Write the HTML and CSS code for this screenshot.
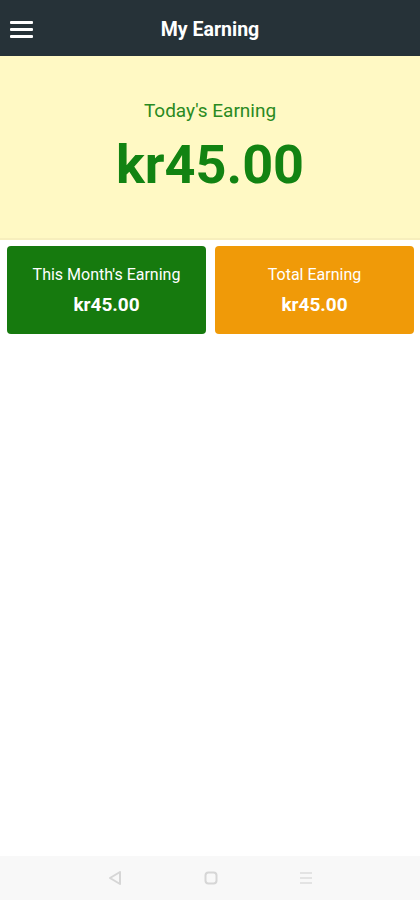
FILE: index.html
```html
<!DOCTYPE html>
<html lang="en">

<head>
    <meta charset="UTF-8">
    <meta name="viewport" content="width=device-width, initial-scale=1.0">
    <title>My Earning</title>
    <link rel="stylesheet" href="styles.css">
</head>

<body>
    <div class="app">
        <div class="topbar">
            <div class="menu-btn">
                <span></span>
                <span></span>
                <span></span>
            </div>
            <h1 class="title">My Earning</h1>
        </div>

        <div class="today">
            <p class="today-label">Today's Earning</p>
            <p class="today-amount">kr45.00</p>
        </div>

        <div class="cards">
            <div class="card card-month">
                <p class="card-label">This Month's Earning</p>
                <p class="card-amount">kr45.00</p>
            </div>
            <div class="card card-total">
                <p class="card-label">Total Earning</p>
                <p class="card-amount">kr45.00</p>
            </div>
        </div>

        <div class="spacer"></div>

        <div class="navbar">
            <svg width="14" height="16" viewBox="0 0 14 16">
                <path d="M12 2 L2 8 L12 14 Z" fill="none" stroke="#d6d6d6" stroke-width="2" stroke-linejoin="round"/>
            </svg>
            <svg width="14" height="14" viewBox="0 0 14 14">
                <rect x="1.5" y="1.5" width="11" height="11" rx="3" fill="none" stroke="#d6d6d6" stroke-width="2"/>
            </svg>
            <svg width="12" height="14" viewBox="0 0 12 14">
                <path d="M0 2 H12 M0 7 H12 M0 12 H12" stroke="#dcdcdc" stroke-width="1.6"/>
            </svg>
        </div>
    </div>
</body>

</html>
```

FILE: styles.css
```css
body {
    font-family: Roboto, "Liberation Sans", Arial, sans-serif;
    margin: 0;
    padding: 0;
    background-color: #ffffff;
}

p {
    margin: 0;
}

.app {
    display: flex;
    flex-direction: column;
    height: 900px;
}

.topbar {
    height: 56px;
    background-color: #263238;
    display: flex;
    align-items: center;
    justify-content: center;
    position: relative;
}

.menu-btn {
    position: absolute;
    left: 10px;
    top: 21px;
    display: flex;
    flex-direction: column;
    gap: 4px;
}

.menu-btn span {
    display: block;
    width: 23px;
    height: 3px;
    background-color: #ffffff;
    border-radius: 1px;
}

.title {
    margin: 0;
    padding-top: 2px;
    color: #ffffff;
    font-size: 19.5px;
    font-weight: bold;
}

.today {
    height: 184px;
    background-color: #fff9c4;
    border-bottom: 2px solid #f7efbd;
    display: flex;
    flex-direction: column;
    align-items: center;
    padding-top: 43px;
    box-sizing: border-box;
}

.today-label {
    color: #2a8a22;
    font-size: 19px;
    line-height: 24px;
}

.today-amount {
    color: #128312;
    font-size: 54px;
    font-weight: bold;
    line-height: 64px;
    margin-top: 10px;
}

.cards {
    display: flex;
    gap: 9px;
    padding: 6px 6px 0 7px;
}

.card {
    flex: 1;
    height: 88px;
    border-radius: 4px;
    color: #ffffff;
    display: flex;
    flex-direction: column;
    align-items: center;
    padding-top: 19px;
    box-sizing: border-box;
}

.card-month {
    background-color: #167a0e;
}

.card-total {
    background-color: #f09a08;
}

.card-label {
    font-size: 16px;
    line-height: 20px;
}

.card-amount {
    font-size: 19px;
    font-weight: bold;
    line-height: 24px;
    margin-top: 8px;
}

.spacer {
    flex: 1;
}

.navbar {
    height: 44px;
    background-color: #f8f8f8;
    display: flex;
    align-items: center;
    justify-content: center;
    gap: 82px;
}
```
